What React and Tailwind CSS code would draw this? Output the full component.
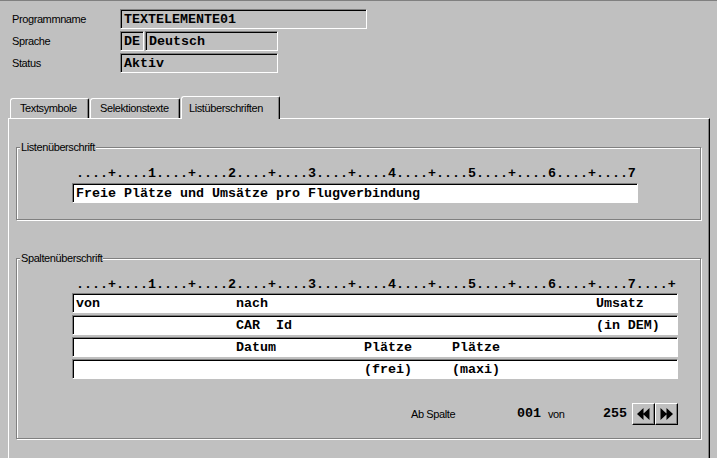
import React from "react";

// SAP GUI style text element screen (Listüberschriften tab)
const sans = "font-['Liberation_Sans',Arial,sans-serif] text-[11px] tracking-[-0.4px]";
const mono = "font-['Liberation_Mono',monospace] font-bold text-[13.333px]";
const sunken =
  "border border-t-[#808080] border-l-[#808080] border-b-white border-r-white shadow-[inset_1px_1px_0_#000]";
const etched =
  "border border-[#808080] shadow-[inset_1px_1px_0_#fff,1px_1px_0_#fff]";

const ruler1 = "....+....1....+....2....+....3....+....4....+....5....+....6....+....7";
const ruler2 = ruler1 + "....+";

const headerRows = [
  [[0, "von"], [20, "nach"], [65, "Umsatz"]],
  [[20, "CAR  Id"], [65, "(in DEM)"]],
  [[20, "Datum"], [36, "Plätze"], [47, "Plätze"]],
  [[36, "(frei)"], [47, "(maxi)"]],
];

const placeCols = (cols) => {
  let s = "";
  cols.forEach(([col, txt]) => {
    s = s.padEnd(col, " ") + txt;
  });
  return s;
};

const Field = ({ value, width }) => (
  <div
    className={`${sunken} ${mono} h-[20px] leading-[17px] pt-[1px] pl-[3px] bg-[#c0c0c0] text-black whitespace-pre`}
    style={{ width }}
  >
    {value}
  </div>
);

const Tab = ({ label, active, width }) => (
  <div
    className={`${sans} flex items-center border-t border-l border-t-white border-l-white border-r border-r-black shadow-[inset_-1px_0_0_#808080] rounded-tl-[3px] rounded-tr-[2px] bg-[#c0c0c0] text-black ${
      active
        ? "relative z-10 h-[23px] -mb-px pl-[7px] ml-[1px]"
        : "h-[20px] pl-[9px]"
    }`}
    style={{ width }}
  >
    {label}
  </div>
);

const GroupBox = ({ title, height, children }) => (
  <div className={`relative ${etched} ml-[7px] w-[685px]`} style={{ height }}>
    <span
      className={`${sans} absolute left-[3px] -top-[8px] bg-[#c0c0c0] px-[1px] leading-[14px] text-black`}
    >
      {title}
    </span>
    {children}
  </div>
);

const NavButton = ({ dir }) => (
  <div className="w-[23px] h-[22px] flex items-center justify-center bg-[#c0c0c0] border border-t-white border-l-white border-b-black border-r-black shadow-[inset_-1px_-1px_0_#808080]">
    <svg width="13" height="12" viewBox="0 0 13 12">
      {dir === "left" ? (
        <path d="M0 6 L6.5 0 L6.5 12 Z M6 6 L12.5 0 L12.5 12 Z" fill="#000" />
      ) : (
        <path d="M13 6 L6.5 0 L6.5 12 Z M7 6 L0.5 0 L0.5 12 Z" fill="#000" />
      )}
    </svg>
  </div>
);

export default function App() {
  return (
    <div className="w-[717px] h-[458px] overflow-hidden bg-[#c0c0c0] border-t border-t-[#808080] flex flex-col text-black">
      {/* Header fields */}
      <div className="pt-[8px] pl-[12px] flex flex-col gap-[2px]">
        <div className="flex items-center h-[20px]">
          <span className={`${sans} w-[108px]`}>Programmname</span>
          <Field value="TEXTELEMENTE01" width={247} />
        </div>
        <div className="flex items-center h-[20px]">
          <span className={`${sans} w-[108px]`}>Sprache</span>
          <Field value="DE" width={24} />
          <div className="w-[1px]" />
          <Field value="Deutsch" width={133} />
        </div>
        <div className="flex items-center h-[20px]">
          <span className={`${sans} w-[108px]`}>Status</span>
          <Field value="Aktiv" width={158} />
        </div>
      </div>

      {/* Tabs */}
      <div className="mt-[23px] ml-[10px] flex items-end h-[22px]">
        <Tab label="Textsymbole" width={79} />
        <div className="w-[1px]" />
        <Tab label="Selektionstexte" width={90} />
        <Tab label="Listüberschriften" active width={99} />
      </div>

      {/* Tab panel */}
      <div className="ml-[8px] w-[702px] flex-1 border-t border-l border-t-white border-l-white border-r border-r-black shadow-[inset_-1px_0_0_#808080] pt-[28px]">
        <GroupBox title="Listenüberschrift" height={73}>
          <div className="pl-[55px] pt-[19px]">
            <div className={`${mono} leading-[14px] pl-[4px] whitespace-pre`}>{ruler1}</div>
            <div
              className={`${sunken} ${mono} mt-[2px] w-[566px] h-[20px] leading-[17px] pt-[1px] pl-[3px] bg-white whitespace-pre`}
            >
              Freie Plätze und Umsätze pro Flugverbindung
            </div>
          </div>
        </GroupBox>

        <div className="h-[38px]" />

        <GroupBox title="Spaltenüberschrift" height={181}>
          <div className="pl-[55px] pt-[19px]">
            <div className={`${mono} leading-[14px] pl-[4px] whitespace-pre`}>{ruler2}</div>
            <div className="mt-[1px] flex flex-col gap-[2px]">
              {headerRows.map((cols, i) => (
                <div
                  key={i}
                  className={`${sunken} ${mono} w-[606px] h-[20px] leading-[17px] pt-[1px] pl-[3px] bg-white whitespace-pre`}
                >
                  {placeCols(cols)}
                </div>
              ))}
            </div>
          </div>
          <div className="mt-[24px] pl-[394px] flex items-center h-[22px]">
            <span className={`${sans} w-[106px]`}>Ab Spalte</span>
            <span className={`${mono} w-[31px]`}>001</span>
            <span className={`${sans} w-[55px]`}>von</span>
            <span className={`${mono} w-[29px]`}>255</span>
            <NavButton dir="left" />
            <NavButton dir="right" />
          </div>
        </GroupBox>
      </div>
    </div>
  );
}
